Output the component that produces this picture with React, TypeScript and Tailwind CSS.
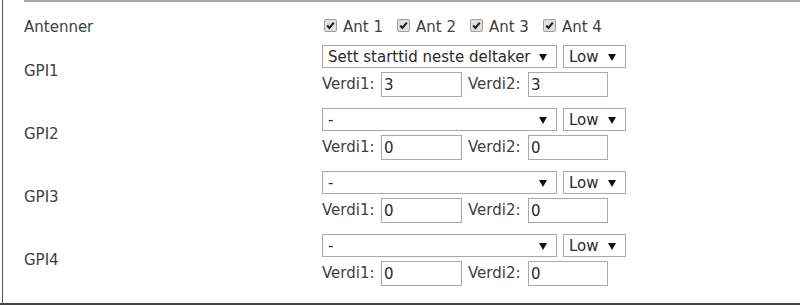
import React from "react";

const font = { fontFamily: '"DejaVu Sans", Verdana, sans-serif' };

function Arrow() {
  return (
    <svg width="8" height="8" viewBox="0 0 8 8" className="shrink-0">
      <polygon points="0,1 8,1 4,8" fill="#111" />
    </svg>
  );
}

function Check({ label }: { label: string }) {
  return (
    <div className="flex items-center mr-[12px]">
      <span className="w-[13px] h-[13px] ml-[2px] mr-[6px] mb-[4px] rounded-[2px] border border-[#a0a0a0] bg-[#e0e0e0] flex items-center justify-center">
        <svg width="11" height="11" viewBox="0 0 11 11">
          <path d="M2.2 5.6 L4.4 7.9 L8.8 2.6" fill="none" stroke="#222" strokeWidth="2.1" />
        </svg>
      </span>
      <span>{label}</span>
    </div>
  );
}

function Select({ value, width }: { value: string; width: string }) {
  return (
    <div className={`${width} h-[23px] border border-[#a9a9a9] bg-white flex items-center justify-between pl-[5px] pr-[9px] text-[#2a2a2a]`}>
      <span className="leading-[21px] pt-[2px]">{value}</span>
      <Arrow />
    </div>
  );
}

function Field({ value, width }: { value: string; width: string }) {
  return (
    <input
      readOnly
      value={value}
      className={`${width} h-[25px] border border-[#a9a9a9] px-[2px] text-[#2a2a2a] outline-none`}
    />
  );
}

const gpis = [
  { name: "GPI1", action: "Sett starttid neste deltaker", v1: "3", v2: "3" },
  { name: "GPI2", action: "-", v1: "0", v2: "0" },
  { name: "GPI3", action: "-", v1: "0", v2: "0" },
  { name: "GPI4", action: "-", v1: "0", v2: "0" },
];

export default function App() {
  return (
    <div style={font} className="w-[800px] h-[305px] bg-white flex flex-col border-b-2 border-[#444] text-[15px] text-[#404040] overflow-hidden">
      <div className="ml-[2px] border-l border-[#555] flex-1 flex flex-col">
        <div className="ml-[21px] h-[2px] bg-[#a8a8a8]" />
        <div className="pl-[21px] flex flex-col">
          {/* Antenner */}
          <div className="flex items-center h-[24px] mt-[13px]">
            <div className="w-[298px]">Antenner</div>
            <div className="flex items-center">
              {["Ant 1", "Ant 2", "Ant 3", "Ant 4"].map((a) => (
                <Check key={a} label={a} />
              ))}
            </div>
          </div>

          {/* GPI rows */}
          <div className="flex flex-col gap-[11px] mt-[6px]">
            {gpis.map((g) => (
              <div key={g.name} className="flex items-center">
                <div className="w-[298px]">{g.name}</div>
                <div className="flex flex-col gap-[4px]">
                  <div className="flex gap-[6px]">
                    <Select value={g.action} width="w-[235px]" />
                    <Select value="Low" width="w-[63px]" />
                  </div>
                  <div className="flex items-center">
                    <span className="w-[59px]">Verdi1:</span>
                    <Field value={g.v1} width="w-[81px]" />
                    <span className="ml-[6px] w-[60px]">Verdi2:</span>
                    <Field value={g.v2} width="w-[80px]" />
                  </div>
                </div>
              </div>
            ))}
          </div>
        </div>
      </div>
    </div>
  );
}
